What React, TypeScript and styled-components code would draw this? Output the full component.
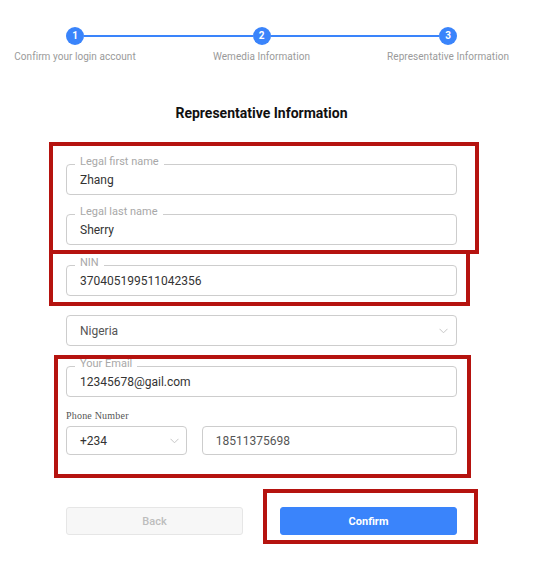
import React from "react";
import styled, { createGlobalStyle } from "styled-components";

const Global = createGlobalStyle`
  html, body { margin: 0; padding: 0; background: #fff; }
  body { font-family: Roboto, "Liberation Sans", Arial, sans-serif; }
  * { box-sizing: border-box; }
`;

const BLUE = "#3a84fb";

const Page = styled.div`
  position: relative;
  width: 541px;
  height: 567px;
  overflow: hidden;
  background: #fff;
`;

const Column = styled.div`
  margin-left: 66px;
  width: 391px;
  padding-top: 27px;
  display: flex;
  flex-direction: column;
`;

const Stepper = styled.div`
  display: flex;
  align-items: flex-start;
`;

const StepItem = styled.div`
  width: 18px;
  display: flex;
  flex-direction: column;
  align-items: center;
`;

const StepDot = styled.div`
  width: 18px;
  height: 18px;
  border-radius: 50%;
  background: ${BLUE};
  color: #fff;
  font-size: 10px;
  font-weight: 700;
  display: flex;
  align-items: center;
  justify-content: center;
  line-height: 1;
`;

const StepLabel = styled.div`
  margin-top: 5px;
  white-space: nowrap;
  font-size: 10px;
  line-height: 13px;
  letter-spacing: 0.05px;
  color: #9a9a9a;
`;

const Connector = styled.div`
  flex: 1;
  height: 2px;
  margin-top: 8px;
  background: ${BLUE};
`;

const Title = styled.h2`
  margin: 42px 0 0;
  text-align: center;
  font-size: 14px;
  line-height: 17px;
  font-weight: 700;
  color: #111;
`;

const Box = styled.div<{ $mt: number; $w?: number; $h?: number }>`
  position: relative;
  margin-top: ${(p) => p.$mt}px;
  width: ${(p) => (p.$w ? `${p.$w}px` : "100%")};
  height: ${(p) => p.$h ?? 31}px;
  border: 1px solid #cdcdcd;
  border-radius: 4px;
  padding: 0 13px;
  display: flex;
  align-items: center;
  justify-content: space-between;
  font-size: 12px;
  color: #333;
  background: #fff;
`;

const FloatLabel = styled.span`
  position: absolute;
  top: -10px;
  left: 8px;
  padding: 0 5px;
  background: #fff;
  font-size: 11px;
  line-height: 13px;
  color: #a8a8a8;
`;

const Value = styled.span<{ $muted?: boolean }>`
  color: ${(p) => (p.$muted ? "#555" : "#333")};
`;

const Chevron = styled.svg<{ $pr: number }>`
  margin-right: ${(p) => p.$pr - 13}px;
  width: 9px;
  height: 6px;
`;

const SmallLabel = styled.div`
  margin-top: 13px;
  font-family: "Liberation Serif", "Times New Roman", serif;
  font-size: 10px;
  line-height: 12px;
  color: #555;
  letter-spacing: 0.2px;
`;

const PhoneRow = styled.div`
  margin-top: 4px;
  display: flex;
  gap: 15px;
`;

const Buttons = styled.div`
  margin-top: 52px;
  display: flex;
  justify-content: space-between;
`;

const Button = styled.button<{ $primary?: boolean }>`
  width: 177px;
  height: 28px;
  border-radius: 3px;
  font-family: inherit;
  font-size: 11px;
  font-weight: ${(p) => (p.$primary ? 700 : 500)};
  border: 1px solid ${(p) => (p.$primary ? BLUE : "#e6e6e6")};
  background: ${(p) => (p.$primary ? BLUE : "#f7f7f7")};
  color: ${(p) => (p.$primary ? "#fff" : "#bdbdbd")};
  padding: 0;
`;

const Mark = styled.div<{ $l: number; $t: number; $w: number; $h: number }>`
  position: absolute;
  left: ${(p) => p.$l}px;
  top: ${(p) => p.$t}px;
  width: ${(p) => p.$w}px;
  height: ${(p) => p.$h}px;
  border: 4px solid #b5130f;
  pointer-events: none;
`;

const Down = ({ pr }: { pr: number }) => (
  <Chevron $pr={pr} viewBox="0 0 9 6" fill="none">
    <path d="M0.5 0.8 L4.5 4.8 L8.5 0.8" stroke="#c6c6c6" strokeWidth="1" />
  </Chevron>
);

const steps = ["Confirm your login account", "Wemedia Information", "Representative Information"];

export default function App() {
  return (
    <Page>
      <Global />
      <Column>
        <Stepper>
          {steps.map((s, i) => (
            <React.Fragment key={s}>
              {i > 0 && <Connector />}
              <StepItem>
                <StepDot>{i + 1}</StepDot>
                <StepLabel>{s}</StepLabel>
              </StepItem>
            </React.Fragment>
          ))}
        </Stepper>

        <Title>Representative Information</Title>

        <Box $mt={42}>
          <FloatLabel>Legal first name</FloatLabel>
          <Value>Zhang</Value>
        </Box>
        <Box $mt={19}>
          <FloatLabel>Legal last name</FloatLabel>
          <Value>Sherry</Value>
        </Box>
        <Box $mt={20} $h={31}>
          <FloatLabel>NIN</FloatLabel>
          <Value>370405199511042356</Value>
        </Box>
        <Box $mt={19}>
          <Value $muted>Nigeria</Value>
          <Down pr={8} />
        </Box>
        <Box $mt={20}>
          <FloatLabel>Your Email</FloatLabel>
          <Value>12345678@gail.com</Value>
        </Box>
        <SmallLabel>Phone Number</SmallLabel>
        <PhoneRow>
          <Box $mt={0} $w={121} $h={29}>
            <Value>+234</Value>
            <Down pr={7} />
          </Box>
          <Box $mt={0} $w={256} $h={29}>
            <Value $muted>18511375698</Value>
          </Box>
        </PhoneRow>

        <Buttons>
          <Button>Back</Button>
          <Button $primary>Confirm</Button>
        </Buttons>
      </Column>

      <Mark $l={49} $t={142} $w={430} $h={112} />
      <Mark $l={49} $t={250} $w={421} $h={56} />
      <Mark $l={54} $t={355} $w={417} $h={123} />
      <Mark $l={263} $t={489} $w={215} $h={55} />
    </Page>
  );
}
